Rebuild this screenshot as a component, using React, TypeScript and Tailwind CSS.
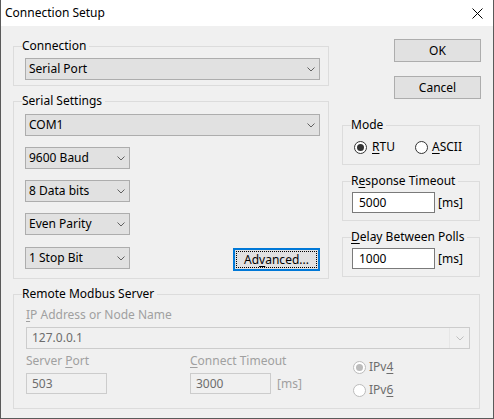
import type { ReactNode } from "react";

function Chevron({ color = "#606060" }: { color?: string }) {
    return (
        <svg width="8" height="5" viewBox="0 0 8 5" className="shrink-0">
            <path d="M0.5 0.5 L4 4 L7.5 0.5" fill="none" stroke={color} strokeWidth="1" />
        </svg>
    );
}

function Combo({ text, className = "" }: { text: string; className?: string }) {
    return (
        <div className={`flex h-[22px] items-center justify-between border border-[#adadad] bg-[#e1e1e1] pl-[3px] pr-[4px] ${className}`}>
            <span className="leading-[16px]">{text}</span>
            <Chevron />
        </div>
    );
}

function Group({ label, className = "", children }: { label: ReactNode; className?: string; children: ReactNode }) {
    return (
        <fieldset className={`border border-[#dcdcdc] ${className}`}>
            <legend className="ml-[8px] pr-[3px] leading-[16px]">{label}</legend>
            {children}
        </fieldset>
    );
}

function Radio({ checked, disabled }: { checked?: boolean; disabled?: boolean }) {
    const edge = disabled ? "border-[#bcbcbc]" : "border-[#333333]";
    const dot = disabled ? "bg-[#bcbcbc]" : "bg-[#333333]";
    return (
        <span className={`flex h-[13px] w-[13px] shrink-0 items-center justify-center rounded-full border bg-white ${edge} ${disabled ? "bg-[#f0f0f0]" : ""}`}>
            {checked && <span className={`h-[7px] w-[7px] rounded-full ${dot}`} />}
        </span>
    );
}

function Button({ children, focused, className = "" }: { children: ReactNode; focused?: boolean; className?: string }) {
    if (focused) {
        return (
            <div className={`h-[23px] w-[87px] border-2 border-[#0078d7] bg-[#e1e1e1] p-[1px] ${className}`}>
                <div className="flex h-full w-full items-center justify-center border border-dotted border-black leading-[16px]">
                    {children}
                </div>
            </div>
        );
    }
    return (
        <div className={`flex h-[23px] w-[87px] items-center justify-center border border-[#adadad] bg-[#e1e1e1] leading-[16px] ${className}`}>
            {children}
        </div>
    );
}

const u = "underline decoration-1 underline-offset-[2px]";

export default function App() {
    return (
        <div className="flex h-[419px] w-[494px] flex-col border-x border-b border-[#5a5a5a] bg-white font-['Noto_Sans',sans-serif] text-[12px] text-black">
            {/* title bar */}
            <div className="flex h-[26px] shrink-0 items-center justify-between bg-white pl-[4px] pr-[10px]">
                <span className="leading-[16px]">Connection Setup</span>
                <svg width="11" height="11" viewBox="0 0 11 11">
                    <path d="M0.5 0.5 L10.5 10.5 M10.5 0.5 L0.5 10.5" stroke="#000" strokeWidth="1" />
                </svg>
            </div>

            <div className="flex-1 bg-[#f0f0f0] pl-[12px] pt-[12px]">
                <div className="flex">
                    {/* left column */}
                    <div className="w-[316px]">
                        <Group label="Connection">
                            <div className="pb-[5px] pl-[11px] pr-[8px] pt-[4px]">
                                <Combo text="Serial Port" />
                            </div>
                        </Group>

                        <Group label="Serial Settings" className="mt-[7px]">
                            <div className="pb-[7px] pl-[11px] pr-[8px] pt-[5px]">
                                <Combo text="COM1" />
                                <Combo text="9600 Baud" className="mt-[11px] w-[105px]" />
                                <Combo text="8 Data bits" className="mt-[11px] w-[105px]" />
                                <Combo text="Even Parity" className="mt-[11px] w-[105px]" />
                                <div className="mt-[12px] flex items-start justify-between">
                                    <Combo text="1 Stop Bit" className="w-[105px]" />
                                    <Button focused className="mt-[1px]">
                                        Ad<span className={u}>v</span>anced...
                                    </Button>
                                </div>
                            </div>
                        </Group>
                    </div>

                    {/* right column */}
                    <div className="ml-[13px] w-[139px]">
                        <Button className="ml-[52px] mt-[1px]">OK</Button>
                        <Button className="ml-[52px] mt-[14px]">Cancel</Button>

                        <Group label="Mode" className="mt-[18px] w-[138px]">
                            <div className="flex h-[16px] items-center pl-[11px]" style={{ marginTop: 6, marginBottom: 9 }}>
                                <div className="flex w-[61px] items-center gap-[5px]">
                                    <Radio checked />
                                    <span className="leading-[16px]"><span className={u}>R</span>TU</span>
                                </div>
                                <div className="flex items-center gap-[4px]">
                                    <Radio />
                                    <span className="leading-[16px]"><span className={u}>A</span>SCII</span>
                                </div>
                            </div>
                        </Group>

                        <Group label={<>R<span className={u}>e</span>sponse Timeout</>} className="mt-[8px] w-[138px]">
                            <div className="flex items-center gap-[3px] pb-[7px] pl-[9px] pt-[3px]">
                                <div className="flex h-[21px] w-[83px] items-center border border-[#7a7a7a] bg-white pl-[6px] leading-[16px]">5000</div>
                                <span className="leading-[16px]">[ms]</span>
                            </div>
                        </Group>

                        <Group label={<><span className={u}>D</span>elay Between Polls</>} className="mt-[8px] w-[138px]">
                            <div className="flex items-center gap-[3px] pb-[7px] pl-[9px] pt-[3px]">
                                <div className="flex h-[21px] w-[83px] items-center border border-[#7a7a7a] bg-white pl-[6px] leading-[16px]">1000</div>
                                <span className="leading-[16px]">[ms]</span>
                            </div>
                        </Group>
                    </div>
                </div>

                {/* remote server */}
                <Group label="Remote Modbus Server" className="mt-[7px] w-[467px]">
                    <div className="pb-[10px] pl-[12px] pt-[5px]">
                        <div className="leading-[16px] text-[#a0a0a0]"><span className={u}>I</span>P Address or Node Name</div>
                        <div className="mt-[4px] flex h-[22px] w-[444px] items-center border border-[#cccccc] bg-[#f0f0f0]">
                            <span className="flex-1 pl-[5px] leading-[16px] text-[#6d6d6d]">127.0.0.1</span>
                            <span className="flex h-full w-[20px] items-center justify-center border-l border-[#e6e6e6]">
                                <Chevron color="#bfbfbf" />
                            </span>
                        </div>
                        <div className="mt-[4px] flex items-start">
                            <div className="w-[164px]">
                                <div className="leading-[16px] text-[#a0a0a0]">Server <span className={u}>P</span>ort</div>
                                <div className="mt-[4px] flex h-[21px] w-[81px] items-center border border-[#cccccc] bg-[#f0f0f0] pl-[5px] leading-[16px] text-[#6d6d6d]">503</div>
                            </div>
                            <div className="w-[163px]">
                                <div className="leading-[16px] text-[#a0a0a0]"><span className={u}>C</span>onnect Timeout</div>
                                <div className="mt-[4px] flex items-center gap-[6px]">
                                    <div className="flex h-[21px] w-[81px] items-center border border-[#cccccc] bg-[#f0f0f0] pl-[5px] leading-[16px] text-[#6d6d6d]">3000</div>
                                    <span className="leading-[16px] text-[#a0a0a0]">[ms]</span>
                                </div>
                            </div>
                            <div className="pt-[6px]">
                                <div className="flex h-[16px] items-center gap-[3px]">
                                    <Radio checked disabled />
                                    <span className="leading-[16px] text-[#6d6d6d]">IPv<span className={u}>4</span></span>
                                </div>
                                <div className="mt-[7px] flex h-[16px] items-center gap-[3px]">
                                    <Radio disabled />
                                    <span className="leading-[16px] text-[#6d6d6d]">IPv<span className={u}>6</span></span>
                                </div>
                            </div>
                        </div>
                    </div>
                </Group>
            </div>
        </div>
    );
}
